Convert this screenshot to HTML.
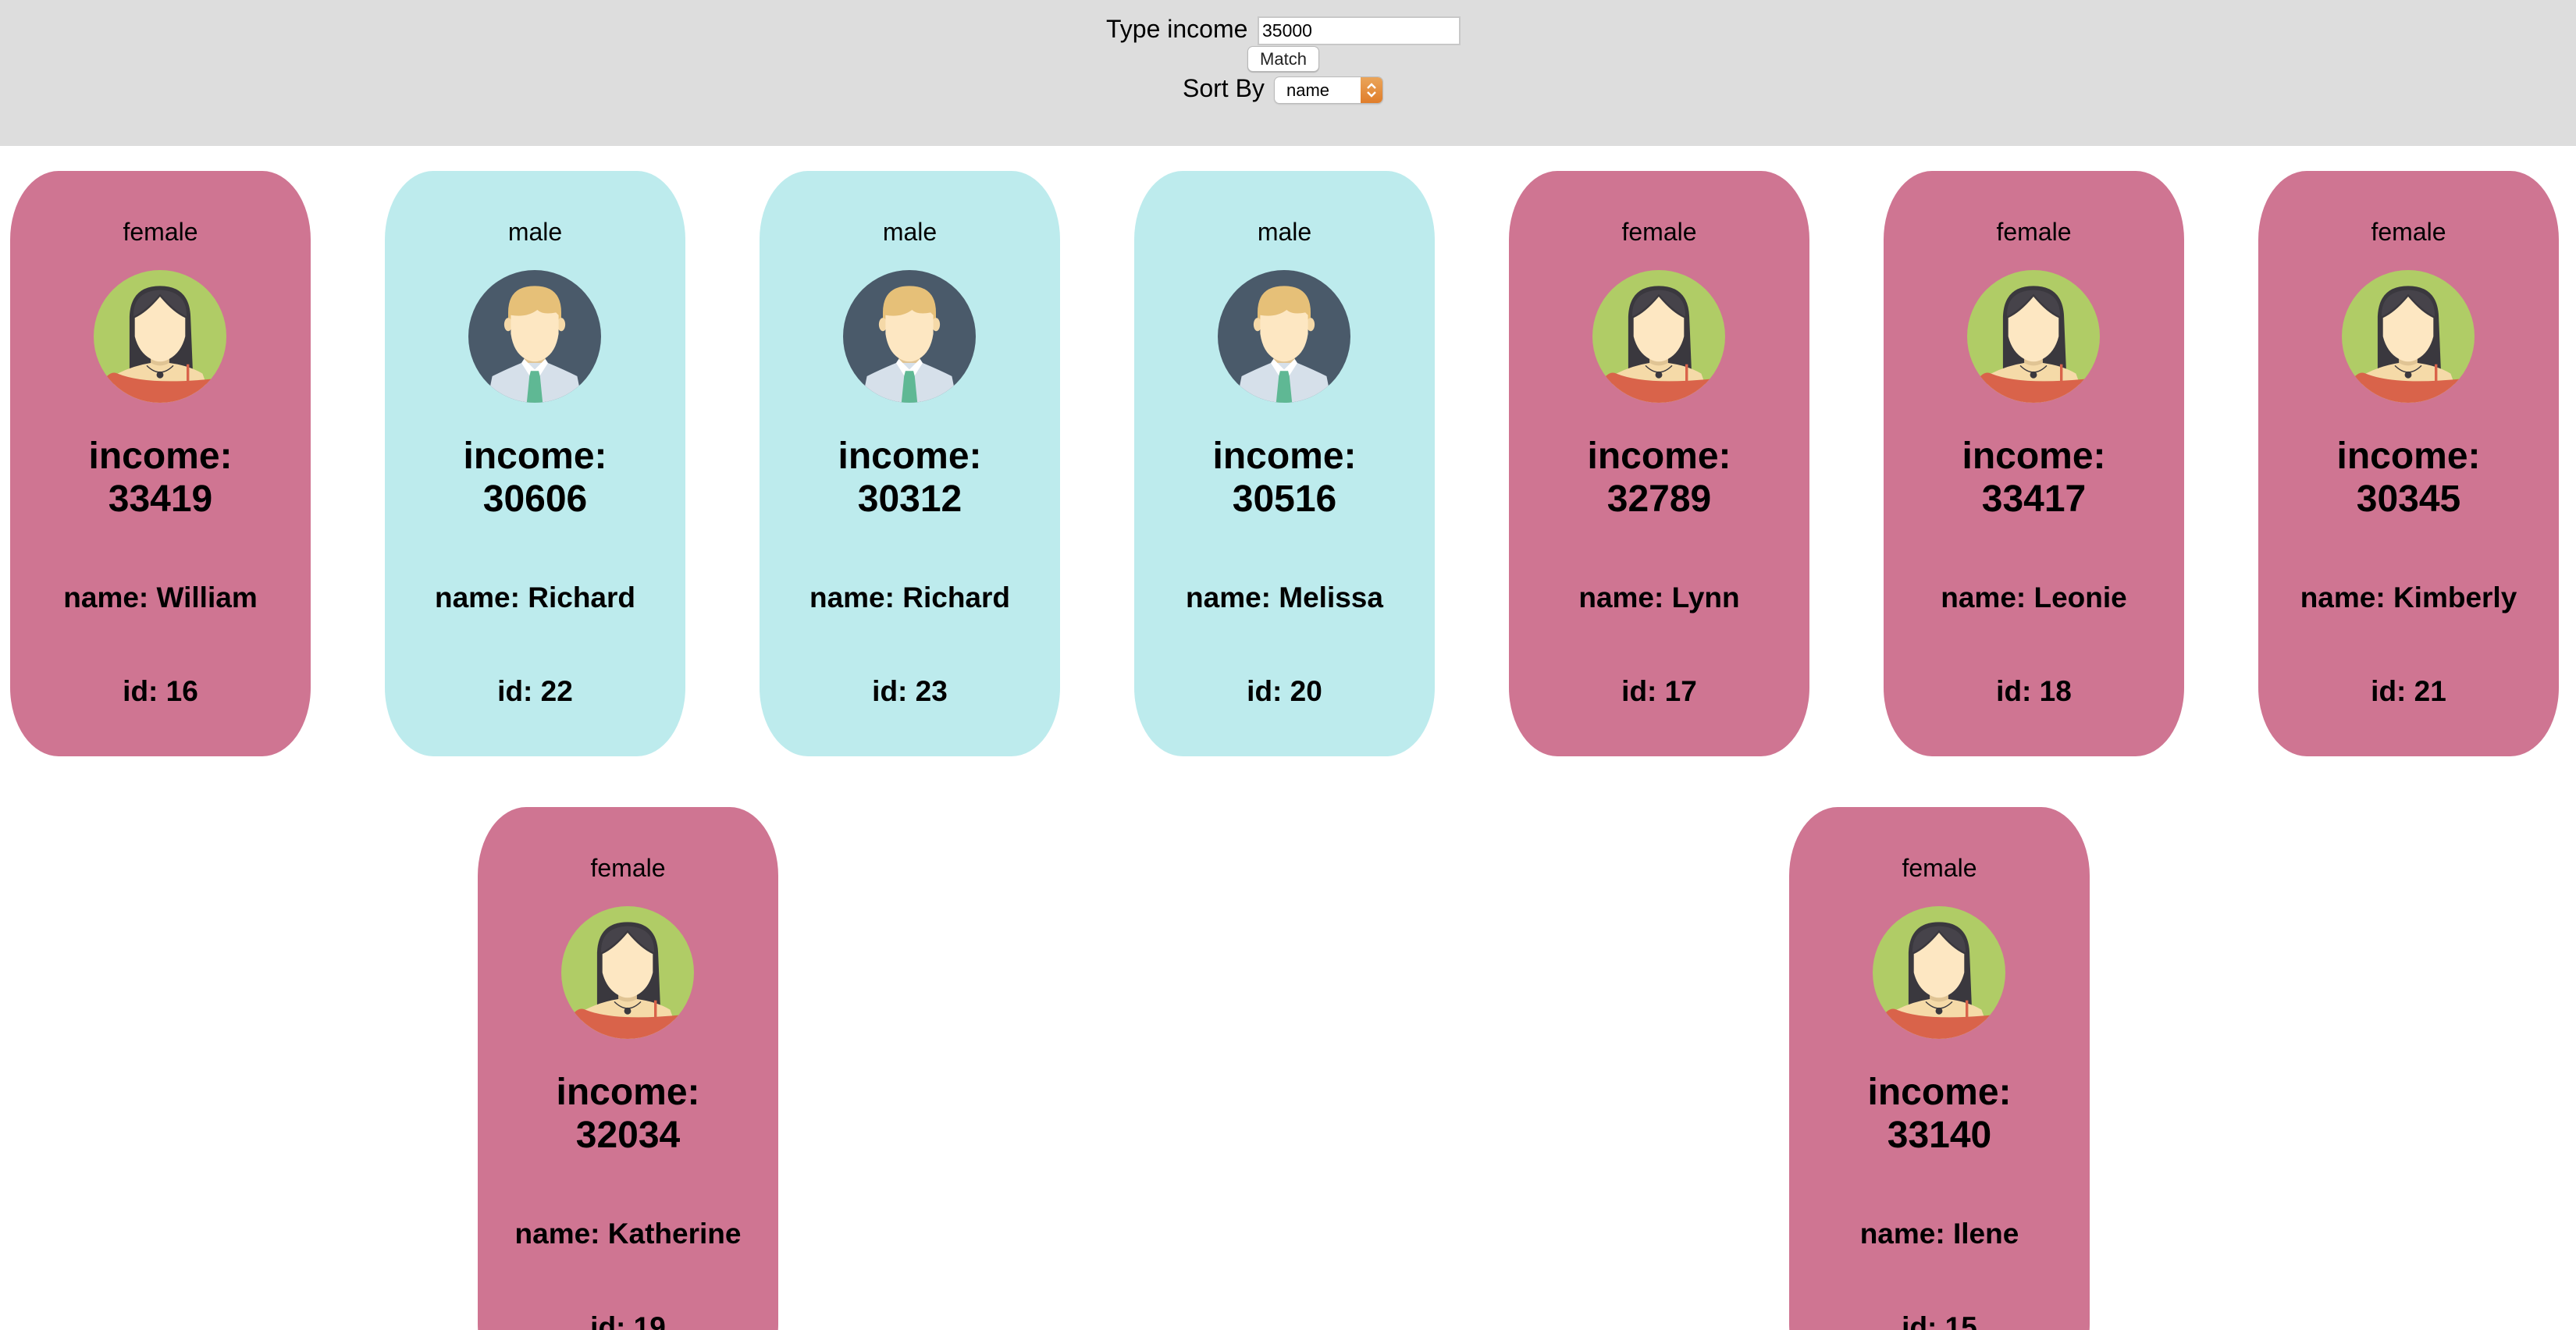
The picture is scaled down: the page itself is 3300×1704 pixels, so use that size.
<!DOCTYPE html>
<html><head><meta charset="utf-8"><style>
html,body{margin:0;padding:0;width:3300px;height:1704px;overflow:hidden;background:#fff;font-family:"Liberation Sans",Helvetica,Arial,sans-serif;color:#000}
.wrap{position:relative;width:3300px;height:1704px;overflow:hidden}
.hdr{position:absolute;left:0;top:0;width:3300px;height:187px;background:#dddddd}
.abs{position:absolute}
.card{position:absolute;width:385px;height:750px;border-radius:62px/88px;text-align:center}
.f{background:#cf7592}.m{background:#bdebed}
.g{position:absolute;left:0;width:100%;top:58px;font-size:32px;line-height:40px}
.av{position:absolute;left:107px;top:127px;width:170px;height:170px}
.inc{position:absolute;left:0;width:100%;top:338px;font-size:48px;font-weight:bold;line-height:55px}
.nm{position:absolute;left:0;width:100%;top:526px;font-size:37px;font-weight:bold;line-height:42px}
.id{position:absolute;left:0;width:100%;top:646px;font-size:37px;font-weight:bold;line-height:42px}
</style></head><body><div class="wrap">
<svg width="0" height="0" style="position:absolute">
<defs>
<clipPath id="cc"><circle cx="50" cy="50" r="50"/></clipPath>
<symbol id="fem" viewBox="0 0 100 100">
<g clip-path="url(#cc)">
<rect width="100" height="100" fill="#b0cc66"/>
<path d="M27 84 L27 35 Q28 12 50 12 Q72 12 73 35 L75 84 Z" fill="#3a383e"/>
<path d="M30 35 Q40 30 50 18 Q60 30 70 35 L70 34 Q70 16 50 15 Q30 16 30 34Z" fill="#46434a"/>
<rect x="43" y="60" width="14" height="20" fill="#e0c494"/>
<path d="M31 36 Q40 32 50 20 Q60 32 69 36 L69 50 Q66 62 57 67 Q50 71 43 67 Q34 62 31 50Z" fill="#fde7c2"/>
<path d="M10 100 L18 78 Q30 72 43 70 Q50 74 57 70 Q72 72 82 78 L90 100Z" fill="#f5daa8"/>
<path d="M40 72 Q50 82 60 72" fill="none" stroke="#3a383e" stroke-width="0.8"/>
<circle cx="50" cy="79" r="2.6" fill="#3a383e"/>
<path d="M5 100 L10 80 Q14 76 18 78 Q40 87 90 82 L95 100Z" fill="#d9634a"/>
<rect x="70" y="71" width="2" height="14" fill="#d9634a"/>
</g></symbol>
<symbol id="mal" viewBox="0 0 100 100">
<g clip-path="url(#cc)">
<rect width="100" height="100" fill="#4a5a6a"/>
<rect x="42" y="58" width="16" height="22" fill="#e0c494"/>
<path d="M30 32 Q30 12 50 12 Q70 12 70 32 L70 42 L30 42Z" fill="#e6c078"/>
<ellipse cx="30" cy="41" rx="3" ry="5" fill="#f5d9a8"/>
<ellipse cx="70" cy="41" rx="3" ry="5" fill="#f5d9a8"/>
<path d="M32 34 Q44 36 52 30 Q56 34 66 32 L68 34 L68 48 Q66 62 57 67 Q50 71 43 67 Q34 62 32 48Z" fill="#fde7c2"/>
<path d="M14 100 L18 80 Q28 75 40 70 L60 70 Q72 75 82 80 L86 100Z" fill="#d6e0ea"/>
<path d="M40 70 L47 81 L50 76 L53 81 L60 70 L58 67 L50 75 L42 67Z" fill="#ffffff"/>
<path d="M47 76 L53 76 L54 80 L56 100 L44 100 L46 80Z" fill="#5fb894"/>
</g></symbol>
</defs></svg>

<div class="hdr">
<div class="abs" style="left:1417px;top:18px;font-size:32px;line-height:38px">Type income</div>
<div class="abs" style="left:1611px;top:21px;width:256px;height:33px;background:#fff;border:2px solid #c8c8c8;box-sizing:content-box;"></div>
<div class="abs" style="left:1617px;top:23px;font-size:23px;line-height:33px">35000</div>
<div class="abs" style="left:1598px;top:59px;width:90px;height:31px;background:#fff;border:1px solid #b8b8b8;border-radius:7px;font-size:22px;line-height:31px;text-align:center;color:#222;box-shadow:0 1px 1px rgba(0,0,0,.2)">Match</div>
<div class="abs" style="left:1515px;top:94px;font-size:32px;line-height:38px">Sort By</div>
<div class="abs" style="left:1633px;top:99px;width:138px;height:33px;background:#fff;border-radius:6px;box-shadow:0 0 0 1px #bbb, 0 1px 2px rgba(0,0,0,.25);overflow:hidden">
<div class="abs" style="left:15px;top:0;font-size:22px;line-height:33px">name</div>
<div class="abs" style="left:110px;top:0;width:28px;height:33px;background:linear-gradient(#eaa55a,#e07d2a)">
<svg width="28" height="33" viewBox="0 0 28 33"><path d="M9 14 L14 9 L19 14 M9 19 L14 24 L19 19" fill="none" stroke="#fff" stroke-width="2.4"/></svg></div>
</div>
</div>

<div class="card f" style="left:13px;top:219px"><div class="g">female</div><svg class="av"><use href="#fem"/></svg><div class="inc">income:<br>33419</div><div class="nm">name: William</div><div class="id">id: 16</div></div>
<div class="card m" style="left:493px;top:219px"><div class="g">male</div><svg class="av"><use href="#mal"/></svg><div class="inc">income:<br>30606</div><div class="nm">name: Richard</div><div class="id">id: 22</div></div>
<div class="card m" style="left:973px;top:219px"><div class="g">male</div><svg class="av"><use href="#mal"/></svg><div class="inc">income:<br>30312</div><div class="nm">name: Richard</div><div class="id">id: 23</div></div>
<div class="card m" style="left:1453px;top:219px"><div class="g">male</div><svg class="av"><use href="#mal"/></svg><div class="inc">income:<br>30516</div><div class="nm">name: Melissa</div><div class="id">id: 20</div></div>
<div class="card f" style="left:1933px;top:219px"><div class="g">female</div><svg class="av"><use href="#fem"/></svg><div class="inc">income:<br>32789</div><div class="nm">name: Lynn</div><div class="id">id: 17</div></div>
<div class="card f" style="left:2413px;top:219px"><div class="g">female</div><svg class="av"><use href="#fem"/></svg><div class="inc">income:<br>33417</div><div class="nm">name: Leonie</div><div class="id">id: 18</div></div>
<div class="card f" style="left:2893px;top:219px"><div class="g">female</div><svg class="av"><use href="#fem"/></svg><div class="inc">income:<br>30345</div><div class="nm">name: Kimberly</div><div class="id">id: 21</div></div>

<div class="card f" style="left:612px;top:1034px"><div class="g">female</div><svg class="av"><use href="#fem"/></svg><div class="inc">income:<br>32034</div><div class="nm">name: Katherine</div><div class="id">id: 19</div></div>
<div class="card f" style="left:2292px;top:1034px"><div class="g">female</div><svg class="av"><use href="#fem"/></svg><div class="inc">income:<br>33140</div><div class="nm">name: Ilene</div><div class="id">id: 15</div></div>
</div></body></html>
